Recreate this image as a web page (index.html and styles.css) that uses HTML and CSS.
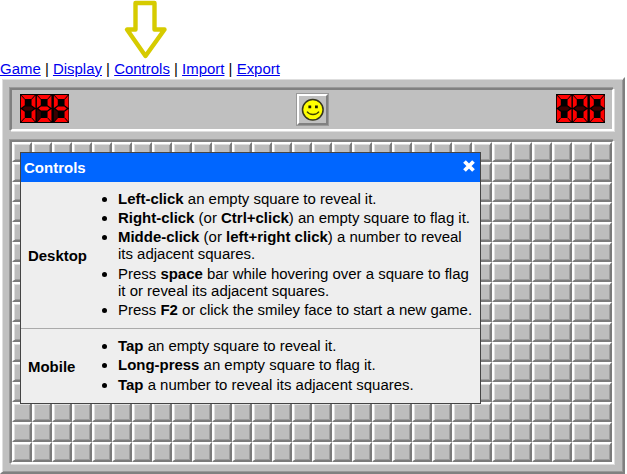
FILE: index.html
```html
<!DOCTYPE html>
<html lang="en">
<head>
<meta charset="utf-8">
<title>Minesweeper</title>
<link rel="stylesheet" href="styles.css">
</head>
<body>
<header class="top">
  <svg class="arrow" width="46" height="60" viewBox="0 0 46 60"><path d="M12.5 3H31.5V29.5H41.5L22.5 56L4 29.5H12.5Z"/></svg>
  <nav class="links"><a href="#">Game</a> | <a href="#">Display</a> | <a href="#">Controls</a> | <a href="#">Import</a> | <a href="#">Export</a></nav>
</header>
<main class="board">
  <section class="status">
    <div class="counter" data-value="099"></div>
    <button class="face" aria-label="New game">
      <svg width="23" height="23" viewBox="0 0 23 23"><circle cx="11.8" cy="11.8" r="10.3" fill="#ff0" stroke="#35351c" stroke-width="1.5"/><path d="M7.4 7.4h2.8v2.8H7.4zM14 7.4h2.8v2.8H14z" fill="#1c1c00"/><path d="M6 13.7Q8 16.5 12 16.5T18 13.7" fill="none" stroke="#404000" stroke-width="1.4"/></svg>
    </button>
    <div class="counter" data-value="000"></div>
  </section>
  <section class="grid" id="grid"></section>
  <section class="dialog">
    <h2 class="title">Controls
      <svg width="14" height="14" viewBox="0 0 14 14"><path d="M2.5 2.5L11.5 11.5M11.5 2.5L2.5 11.5"/></svg>
    </h2>
    <div class="row desktop">
      <b class="device">Desktop</b>
      <ul>
        <li><b>Left-click</b> an empty square to reveal it.</li>
        <li><b>Right-click</b> (or <b>Ctrl+click</b>) an empty square to flag it.</li>
        <li><b>Midde-click</b> (or <b>left+right click</b>) a number to reveal<br>its adjacent squares.</li>
        <li>Press <b>space</b> bar while hovering over a square to flag<br>it or reveal its adjacent squares.</li>
        <li>Press <b>F2</b> or click the smiley face to start a new game.</li>
      </ul>
    </div>
    <div class="row mobile">
      <b class="device">Mobile</b>
      <ul>
        <li><b>Tap</b> an empty square to reveal it.</li>
        <li><b>Long-press</b> an empty square to flag it.</li>
        <li><b>Tap</b> a number to reveal its adjacent squares.</li>
      </ul>
    </div>
  </section>
</main>
<script src="board.js"></script>
</body>
</html>
```
FILE: styles.css
```css
* { box-sizing: border-box; }
body {
  margin: 0;
  background: #fff;
  color: #000;
  font: 14.96px/17px "Liberation Sans", Arial, sans-serif;
  overflow: hidden;
}
.top { height: 77px; }
.arrow { display: block; margin-left: 123px; }
.arrow path { fill: #fff; stroke: #d6cb00; stroke-width: 4.4; stroke-linejoin: round; }
.links { white-space: nowrap; }
.links a { color: #00e; }
.board {
  position: relative;
  width: 625px;
  height: 397px;
  padding: 9px 7px 6px 8px;
  background: #c0c0c0;
  border: 2px solid;
  border-color: #fff #808080 #808080 #fff;
  box-shadow: inset 1px 1px #dedede, inset -1px -1px #999;
}
.status {
  display: flex;
  justify-content: space-between;
  width: 604px;
  height: 43px;
  padding: 4px 7px 0 8px;
  border: 2px solid;
  border-color: #808080 #fff #fff #808080;
  box-shadow: -1px -1px #999, 1px 1px #dedede;
}
.counter {
  display: flex;
  width: 49px;
  height: 29px;
  background: #000;
}
.counter svg { flex: 1; min-width: 0; height: 29px; }
.on { fill: #f00; }
.off { fill: #3a0000; }
.face {
  display: grid;
  place-items: center;
  width: 33px;
  height: 33px;
  margin-top: -1px;
  padding: 0;
  background: #c0c0c0;
  border: 3px solid;
  border-color: #fff #808080 #808080 #fff;
  outline: 1px solid #999;
  outline-offset: -1px;
}
.grid {
  display: grid;
  grid-template-columns: repeat(30, 20px);
  grid-auto-rows: 20px;
  width: 604px;
  margin-top: 9px;
  border: 2px solid;
  border-color: #808080 #fff #fff #808080;
  box-shadow: -1px -1px #999, 1px 1px #dedede;
}
.cell {
  border: 2px solid;
  border-color: #fff #7b7b7b #7b7b7b #fff;
  background: #bdbdbd;
  box-shadow: inset 1px 1px #dedede, inset -1px -1px #9c9c9c;
}
.dialog {
  position: absolute;
  left: 18px;
  top: 73px;
  width: 461px;
  height: 252px;
  border: 1px solid #444;
  background: #eee;
}
.title {
  display: flex;
  justify-content: space-between;
  align-items: center;
  height: 29px;
  margin: 0;
  padding: 0 4px 0 3px;
  background: #06f;
  color: #fff;
  font-size: 15px;
}
.title svg { margin-top: -3px; }
.title path { stroke: #fff; stroke-width: 3.8; }
.row {
  display: grid;
  grid-template-columns: 90px 1fr;
  align-items: center;
  padding-left: 7px;
}
.desktop { height: 147px; border-bottom: 1px solid #aaa; }
.mobile { height: 74px; }
.row ul { margin: 0; padding: 0; white-space: nowrap; }
.row li { margin-bottom: 2.4px; }
```
FILE: board.js
```js
const segments = [
  'M1.2 .8H11.8L9 4H4Z',
  'M12.3 1.2V11.2L9.2 9V4.6Z',
  'M12.3 11.8V21.8L9.2 18.4V14Z',
  'M1.2 22.2H11.8L9 19H4Z',
  'M.7 11.8V21.8L3.8 18.4V14Z',
  'M.7 1.2V11.2L3.8 9V4.6Z',
  'M2 11.5L4 10H9L11 11.5L9 13H4Z'
];
const lit = { 0: [0, 1, 2, 3, 4, 5], 9: [0, 1, 2, 3, 5, 6] };

document.querySelectorAll('.counter').forEach(counter => {
  counter.innerHTML = [...counter.dataset.value].map(digit =>
    '<svg viewBox="0 0 13 23" preserveAspectRatio="none">' +
    segments.map((d, i) =>
      `<path class="${lit[digit].includes(i) ? 'on' : 'off'}" d="${d}"/>`).join('') +
    '</svg>').join('');
});

const grid = document.getElementById('grid');
for (let i = 0; i < 30 * 16; i++) {
  const cell = document.createElement('div');
  cell.className = 'cell';
  grid.append(cell);
}
```
